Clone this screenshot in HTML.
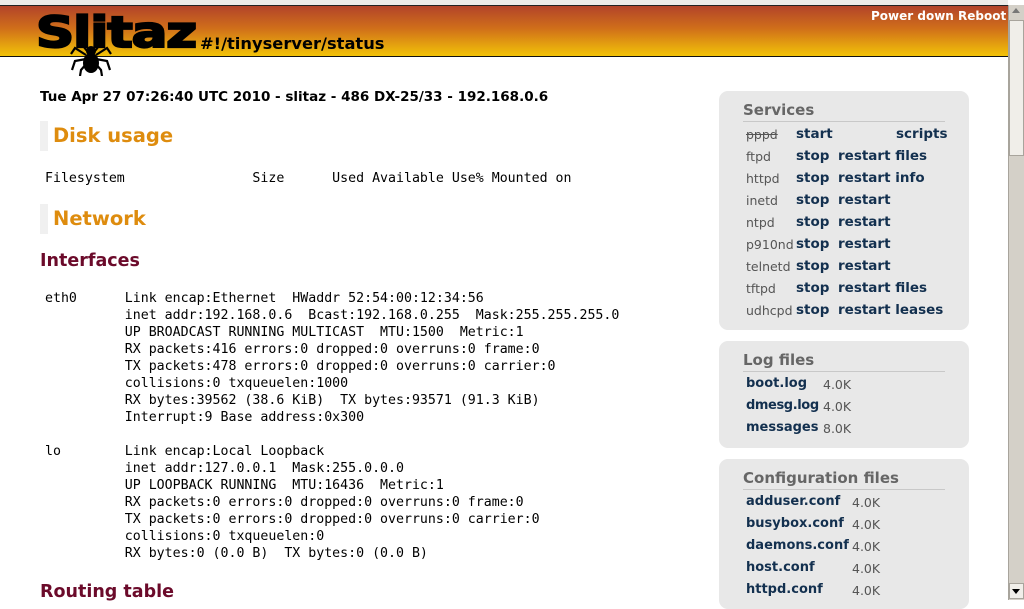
<!DOCTYPE html>
<html><head><meta charset="utf-8">
<style>
*{margin:0;padding:0;box-sizing:border-box}
body{width:1024px;height:600px;overflow:hidden;background:#fff;position:relative;font-family:"DejaVu Sans","Liberation Sans",sans-serif}
.a{position:absolute;white-space:pre}
#top{position:absolute;left:0;top:0;width:1008px;height:5px;background:#ecebe8}
#hdr{position:absolute;left:0;top:5px;width:1008px;height:52px;background:linear-gradient(#b2432a 0%,#d06f1a 45%,#f2c308 100%);border-top:1px solid #222;border-bottom:1px solid #111}
.logo{position:absolute;left:36px;top:11px;font:bold 50px/50px "DejaVu Sans",sans-serif;letter-spacing:-1px;color:#000;-webkit-text-stroke:2.5px #000;transform:scale(1.06,0.86);transform-origin:top left}
.path{left:200px;top:34px;font-weight:bold;font-size:16.3px;color:#000}
.pw{left:871px;top:9px;font-weight:bold;font-size:12px;color:#fff}
#sb{position:absolute;left:1008px;top:5px;width:16px;height:595px;background:#d4d0c8;border-left:1px solid #a8a49c}
#thumb{position:absolute;left:1009px;top:20px;width:15px;height:136px;background:#f0eee9;border:1px solid #a8a49c}
.date{left:40px;top:89px;font-weight:bold;font-size:13.5px;color:#000}
.h2{font-weight:bold;font-size:19.5px;color:#de8c0e}
.bar{position:absolute;width:8px;height:30px;background:#f0f0f0}
.h3{font-weight:bold;font-size:17.5px;color:#6b0a2a}
.m{font-family:"DejaVu Sans Mono","Liberation Mono",monospace;font-size:13.25px;line-height:17px;color:#000}
.box{position:absolute;left:719px;width:250px;background:#e8e8e8;border-radius:9px}
.bt{position:absolute;left:24px;font-weight:bold;font-size:15px;color:#666;width:202px;border-bottom:1px solid #c8c8c8;padding-bottom:2px}
.l{font-weight:bold;font-size:13.5px;color:#13304f}
.s{font-size:13px}
.g{font-size:12.5px;color:#555;margin-top:1px}
</style></head><body>
<div id="top"></div>
<div id="hdr"></div>
<div class="logo">Slitaz</div>
<svg style="position:absolute;left:68px;top:34px" width="46" height="42" viewBox="0 0 46 42">
<g stroke="#000" stroke-width="2.2" fill="none">
<path d="M19 17 L12 8 L10 0"/><path d="M27 17 L34 8 L36 0"/>
<path d="M18 21 L7 14 L3 20"/><path d="M28 21 L39 14 L43 20"/>
<path d="M18 25 L7 27 L4 36"/><path d="M28 25 L39 27 L42 36"/>
<path d="M19 29 L13 36 L12 42"/><path d="M27 29 L33 36 L34 42"/>
</g>
<ellipse cx="23" cy="17" rx="5" ry="5" fill="#000"/>
<ellipse cx="23" cy="29" rx="8" ry="10" fill="#000"/>
</svg>
<div class="a path">#!/tinyserver/status</div>
<div class="a pw">Power down Reboot</div>
<div id="sb"></div>
<div id="thumb"></div>
<div style="position:absolute;left:1012px;top:8px;width:0;height:0;border-left:4px solid transparent;border-right:4px solid transparent;border-bottom:5px solid #777"></div>
<div style="position:absolute;left:1009px;top:583px;width:15px;height:16px;background:#f0eee9;border:1px solid #a8a49c"></div>
<div style="position:absolute;left:1012px;top:589px;width:0;height:0;border-left:4px solid transparent;border-right:4px solid transparent;border-top:5px solid #000"></div>

<div class="a date">Tue Apr 27 07:26:40 UTC 2010 - slitaz - 486 DX-25/33 - 192.168.0.6</div>
<div class="bar" style="left:40px;top:121px"></div>
<div class="a h2" style="left:53px;top:124px">Disk usage</div>
<div class="a m" style="left:45px;top:170px">Filesystem                Size      Used Available Use% Mounted on</div>
<div class="bar" style="left:40px;top:204px"></div>
<div class="a h2" style="left:53px;top:207px">Network</div>
<div class="a h3" style="left:40px;top:251px">Interfaces</div>
<div class="a m" style="left:45px;top:290px">eth0      Link encap:Ethernet  HWaddr 52:54:00:12:34:56
          inet addr:192.168.0.6  Bcast:192.168.0.255  Mask:255.255.255.0
          UP BROADCAST RUNNING MULTICAST  MTU:1500  Metric:1
          RX packets:416 errors:0 dropped:0 overruns:0 frame:0
          TX packets:478 errors:0 dropped:0 overruns:0 carrier:0
          collisions:0 txqueuelen:1000
          RX bytes:39562 (38.6 KiB)  TX bytes:93571 (91.3 KiB)
          Interrupt:9 Base address:0x300

lo        Link encap:Local Loopback
          inet addr:127.0.0.1  Mask:255.0.0.0
          UP LOOPBACK RUNNING  MTU:16436  Metric:1
          RX packets:0 errors:0 dropped:0 overruns:0 frame:0
          TX packets:0 errors:0 dropped:0 overruns:0 carrier:0
          collisions:0 txqueuelen:0
          RX bytes:0 (0.0 B)  TX bytes:0 (0.0 B)</div>
<div class="a h3" style="left:40px;top:582px">Routing table</div>

<div class="box" style="top:91px;height:239px"><div class="bt" style="top:10px">Services</div></div>
<div class="box" style="top:341px;height:107px"><div class="bt" style="top:10px">Log files</div></div>
<div class="box" style="top:459px;height:150px"><div class="bt" style="top:10px">Configuration files</div></div>

<div class="a g" style="left:746px;top:126px;text-decoration:line-through">pppd</div>
<div class="a l" style="left:796px;top:126px">start</div>
<div class="a l" style="left:896px;top:126px">scripts</div>
<div class="a g" style="left:746px;top:148px">ftpd</div><div class="a l" style="left:796px;top:148px">stop</div><div class="a l" style="left:838px;top:148px">restart files</div>
<div class="a g" style="left:746px;top:170px">httpd</div><div class="a l" style="left:796px;top:170px">stop</div><div class="a l" style="left:838px;top:170px">restart info</div>
<div class="a g" style="left:746px;top:192px">inetd</div><div class="a l" style="left:796px;top:192px">stop</div><div class="a l" style="left:838px;top:192px">restart</div>
<div class="a g" style="left:746px;top:214px">ntpd</div><div class="a l" style="left:796px;top:214px">stop</div><div class="a l" style="left:838px;top:214px">restart</div>
<div class="a g" style="left:746px;top:236px">p910nd</div><div class="a l" style="left:796px;top:236px">stop</div><div class="a l" style="left:838px;top:236px">restart</div>
<div class="a g" style="left:746px;top:258px">telnetd</div><div class="a l" style="left:796px;top:258px">stop</div><div class="a l" style="left:838px;top:258px">restart</div>
<div class="a g" style="left:746px;top:280px">tftpd</div><div class="a l" style="left:796px;top:280px">stop</div><div class="a l" style="left:838px;top:280px">restart files</div>
<div class="a g" style="left:746px;top:302px">udhcpd</div><div class="a l" style="left:796px;top:302px">stop</div><div class="a l" style="left:838px;top:302px">restart leases</div>

<div class="a l s" style="left:746px;top:376px">boot.log</div><div class="a g" style="left:823px;top:376px">4.0K</div>
<div class="a l s" style="left:746px;top:398px;letter-spacing:-0.4px">dmesg.log</div><div class="a g" style="left:823px;top:398px">4.0K</div>
<div class="a l s" style="left:746px;top:420px">messages</div><div class="a g" style="left:823px;top:420px">8.0K</div>

<div class="a l s" style="left:746px;top:494px">adduser.conf</div><div class="a g" style="left:852px;top:494px">4.0K</div>
<div class="a l s" style="left:746px;top:516px">busybox.conf</div><div class="a g" style="left:852px;top:516px">4.0K</div>
<div class="a l s" style="left:746px;top:538px">daemons.conf</div><div class="a g" style="left:852px;top:538px">4.0K</div>
<div class="a l s" style="left:746px;top:560px">host.conf</div><div class="a g" style="left:852px;top:560px">4.0K</div>
<div class="a l s" style="left:746px;top:582px">httpd.conf</div><div class="a g" style="left:852px;top:582px">4.0K</div>
</body></html>
